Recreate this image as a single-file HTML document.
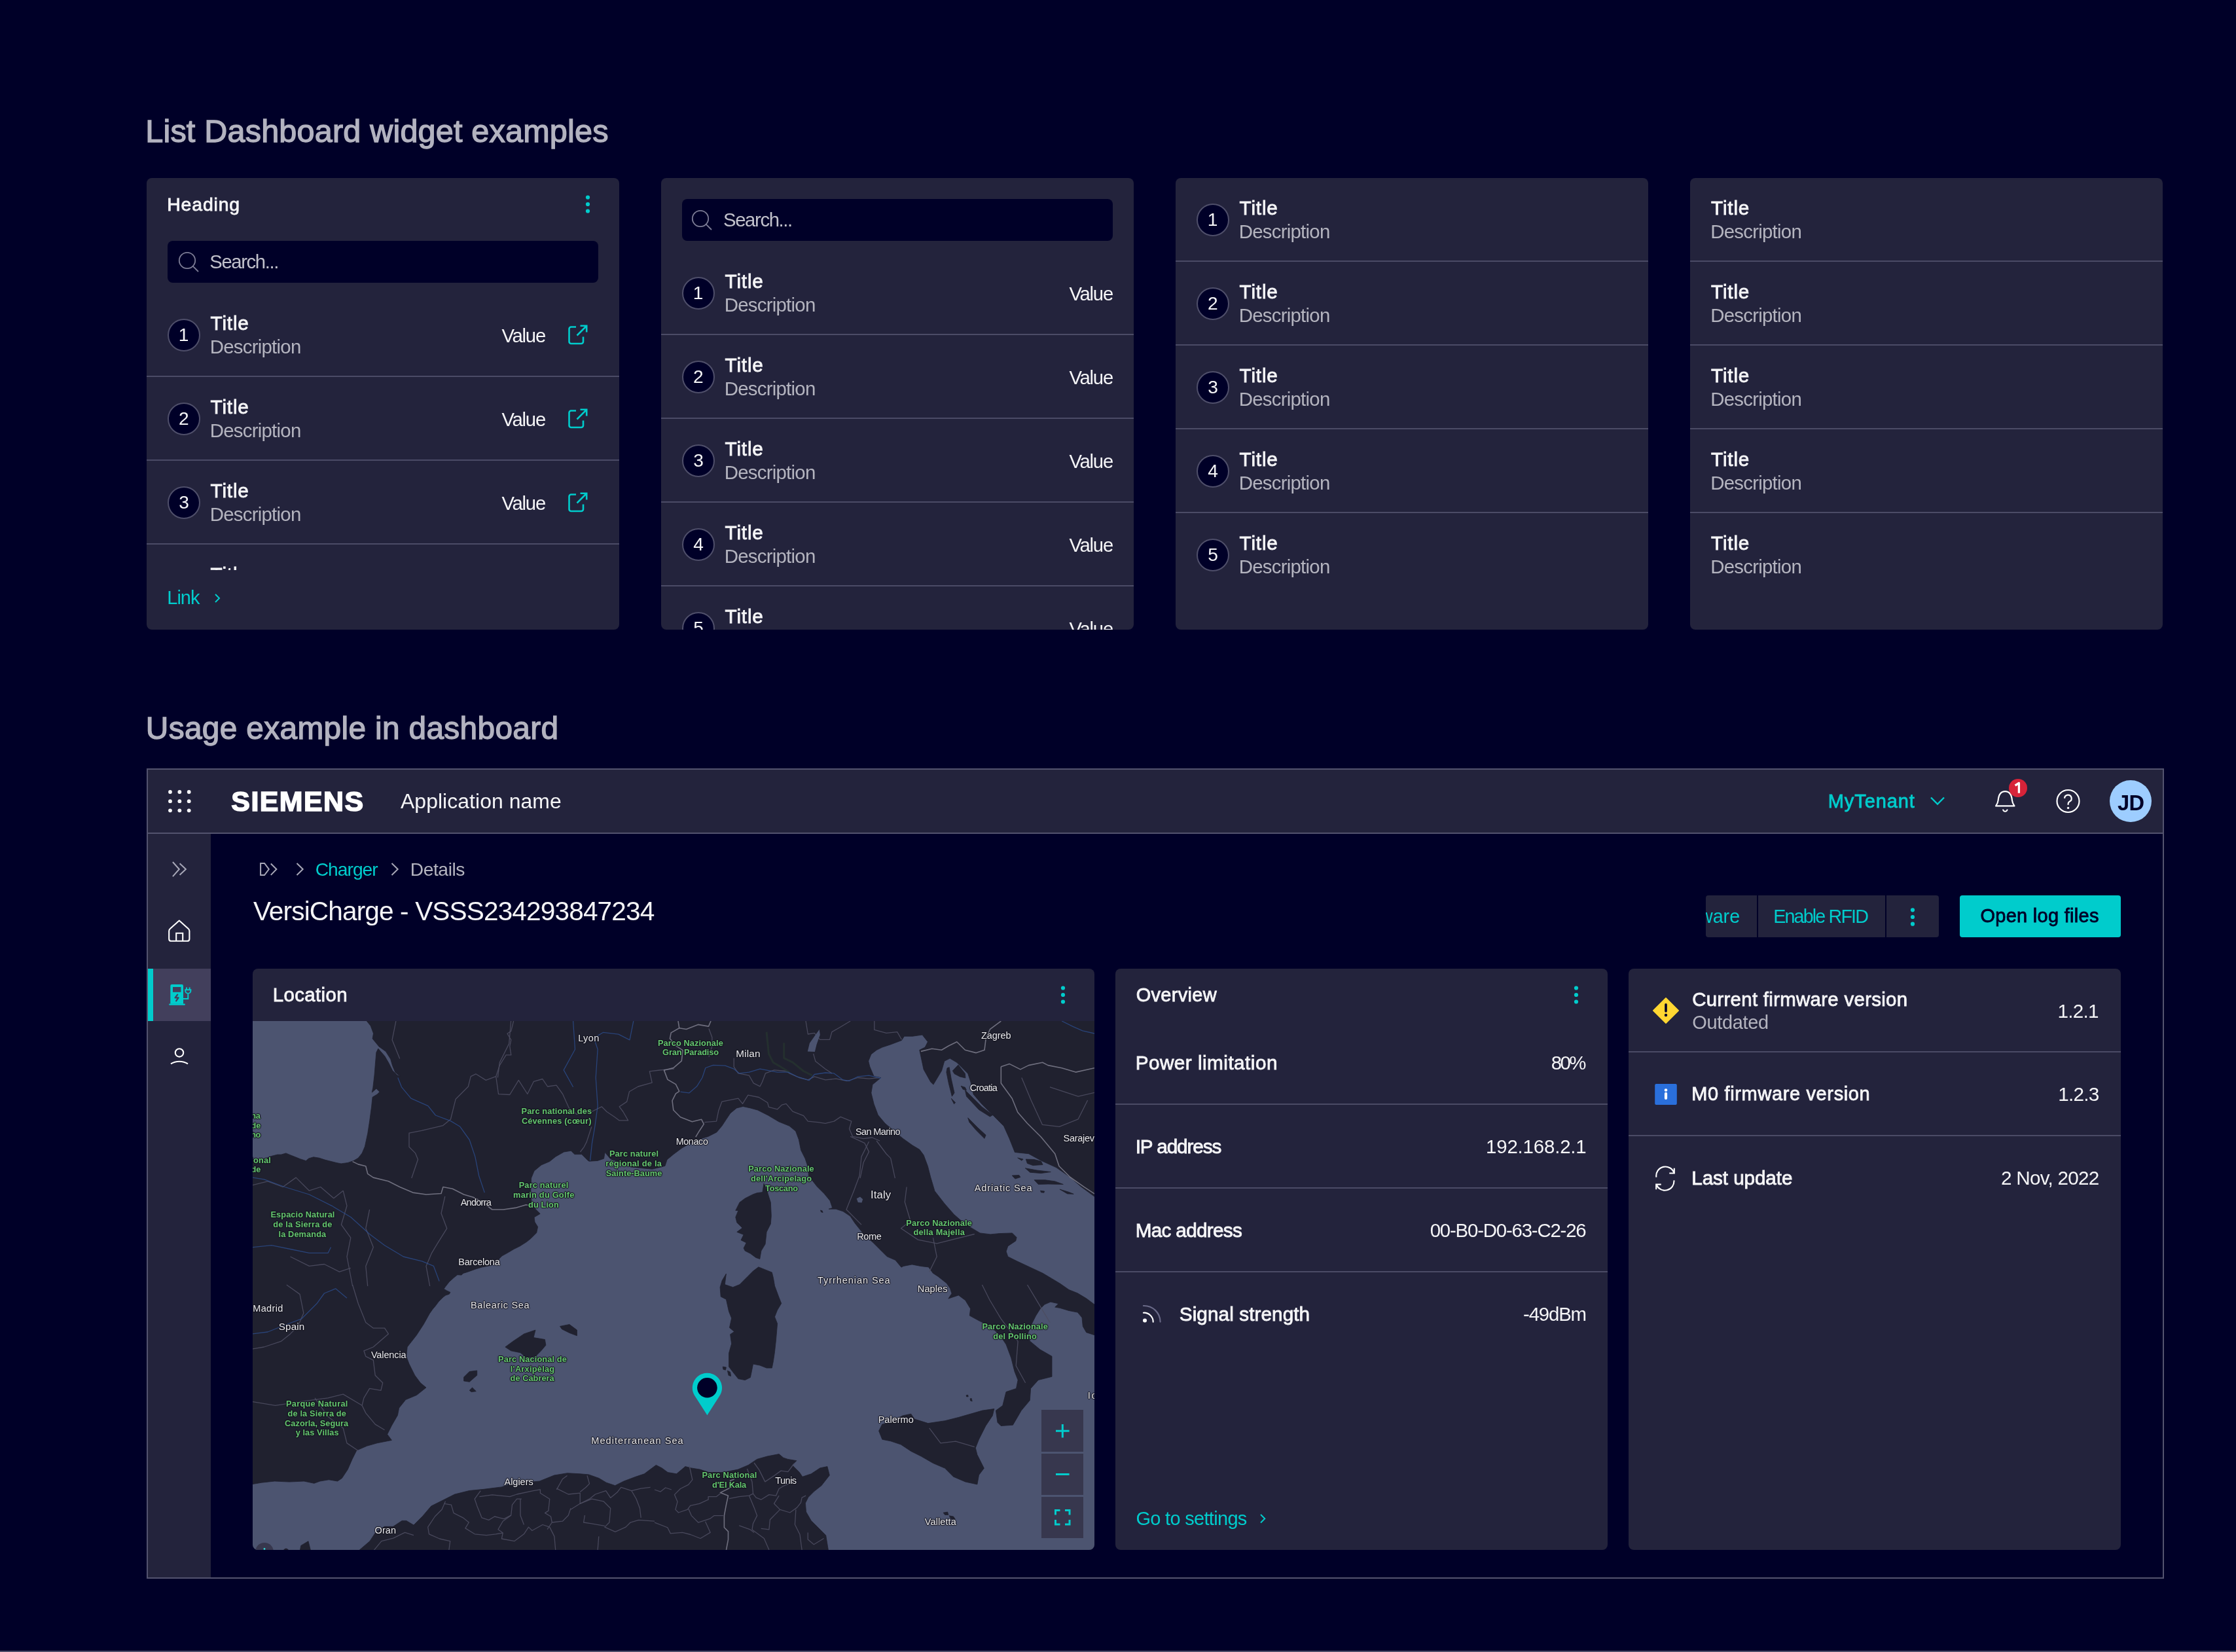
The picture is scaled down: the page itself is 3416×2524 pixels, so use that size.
<!DOCTYPE html>
<html><head><meta charset="utf-8"><style>
html,body{margin:0;padding:0;}
body{width:3416px;height:2524px;background:#000028;position:relative;overflow:hidden;font-family:"Liberation Sans",sans-serif;}
#root{position:absolute;left:0;top:0;width:3416px;height:2524px;will-change:transform;}
.a{position:absolute;}
.t{position:absolute;white-space:nowrap;line-height:1;}
.lbl .t{text-shadow:0 0 1.5px #14141e,1px 0 1px #14141e,-1px 0 1px #14141e,0 1px 1px #14141e,0 -1px 1px #14141e;}
svg.a{overflow:visible}
</style></head><body>
<div id="root"><div class="t" style="left:222.21px;top:175.73px;font-size:48.55px;letter-spacing:0.195px;color:#b3b3c0;-webkit-text-stroke:1.36px #b3b3c0">List Dashboard widget examples</div>
<div class="a" style="left:224.00px;top:272.00px;width:722.00px;height:690.00px;background:#23233c;border-radius:8px"></div>
<div class="t" style="left:255.28px;top:297.86px;font-size:28.41px;letter-spacing:0.833px;color:#f5f5f7;-webkit-text-stroke:0.80px #f5f5f7">Heading</div>
<svg class="a" style="left:886.00px;top:300.00px" width="24" height="24" viewBox="0 0 24 24"><circle cx="12" cy="1.5" r="3.1" fill="#00cccc"/><circle cx="12" cy="12" r="3.1" fill="#00cccc"/><circle cx="12" cy="22.5" r="3.1" fill="#00cccc"/></svg>
<div class="a" style="left:256.00px;top:368.00px;width:658.00px;height:64.00px;background:#000028;border-radius:8px"></div>
<svg class="a" style="left:272.00px;top:384.00px" width="34" height="34" viewBox="0 0 34 34"><circle cx="14" cy="14" r="12.2" fill="none" stroke="#7d7d96" stroke-width="1.8"/><line x1="22.6" y1="22.6" x2="31" y2="31" stroke="#7d7d96" stroke-width="1.8"/></svg>
<div class="t" style="left:320.29px;top:385.12px;font-size:29.28px;letter-spacing:-1.375px;color:#c2c2cc;font-weight:400">Search...</div>
<div class="a" style="left:224px;top:432px;width:722px;height:439px;overflow:hidden"><div class="a" style="left:32.00px;top:55.00px;width:50px;height:50px;box-sizing:border-box;border:2px solid #4f4f6a;border-radius:50%;background:#000028"></div><div class="t" style="left:48.87px;top:66.10px;font-size:28.12px;letter-spacing:0.000px;color:#f5f5f7;font-weight:400">1</div><div class="t" style="left:97.54px;top:47.25px;font-size:29.71px;letter-spacing:0.836px;color:#f5f5f7;-webkit-text-stroke:0.83px #f5f5f7">Title</div><div class="t" style="left:96.70px;top:83.29px;font-size:29.42px;letter-spacing:-0.751px;color:#b4b4bf;font-weight:400">Description</div><div class="t" style="left:542.40px;top:65.62px;font-size:29.28px;letter-spacing:-1.229px;color:#f5f5f7;font-weight:400">Value</div><svg class="a" style="left:644.00px;top:64.00px" width="30" height="31" viewBox="0 0 30 31"><path d="M12 3.5H4.5a3 3 0 0 0-3 3V26a3 3 0 0 0 3 3H20a3 3 0 0 0 3-3V18.5" fill="none" stroke="#00cccc" stroke-width="2.6"/><path d="M13.5 16.5L28 2M18.5 1.8H28.2V11.5" fill="none" stroke="#00cccc" stroke-width="2.6"/></svg><div class="a" style="left:0.00px;top:142.00px;width:722.00px;height:2.00px;background:#4b4b66;"></div><div class="a" style="left:32.00px;top:183.00px;width:50px;height:50px;box-sizing:border-box;border:2px solid #4f4f6a;border-radius:50%;background:#000028"></div><div class="t" style="left:49.09px;top:194.10px;font-size:28.12px;letter-spacing:0.000px;color:#f5f5f7;font-weight:400">2</div><div class="t" style="left:97.54px;top:175.25px;font-size:29.71px;letter-spacing:0.836px;color:#f5f5f7;-webkit-text-stroke:0.83px #f5f5f7">Title</div><div class="t" style="left:96.70px;top:211.29px;font-size:29.42px;letter-spacing:-0.751px;color:#b4b4bf;font-weight:400">Description</div><div class="t" style="left:542.40px;top:193.62px;font-size:29.28px;letter-spacing:-1.229px;color:#f5f5f7;font-weight:400">Value</div><svg class="a" style="left:644.00px;top:192.00px" width="30" height="31" viewBox="0 0 30 31"><path d="M12 3.5H4.5a3 3 0 0 0-3 3V26a3 3 0 0 0 3 3H20a3 3 0 0 0 3-3V18.5" fill="none" stroke="#00cccc" stroke-width="2.6"/><path d="M13.5 16.5L28 2M18.5 1.8H28.2V11.5" fill="none" stroke="#00cccc" stroke-width="2.6"/></svg><div class="a" style="left:0.00px;top:270.00px;width:722.00px;height:2.00px;background:#4b4b66;"></div><div class="a" style="left:32.00px;top:311.00px;width:50px;height:50px;box-sizing:border-box;border:2px solid #4f4f6a;border-radius:50%;background:#000028"></div><div class="t" style="left:49.31px;top:322.10px;font-size:28.12px;letter-spacing:0.000px;color:#f5f5f7;font-weight:400">3</div><div class="t" style="left:97.54px;top:303.25px;font-size:29.71px;letter-spacing:0.836px;color:#f5f5f7;-webkit-text-stroke:0.83px #f5f5f7">Title</div><div class="t" style="left:96.70px;top:339.29px;font-size:29.42px;letter-spacing:-0.751px;color:#b4b4bf;font-weight:400">Description</div><div class="t" style="left:542.40px;top:321.62px;font-size:29.28px;letter-spacing:-1.229px;color:#f5f5f7;font-weight:400">Value</div><svg class="a" style="left:644.00px;top:320.00px" width="30" height="31" viewBox="0 0 30 31"><path d="M12 3.5H4.5a3 3 0 0 0-3 3V26a3 3 0 0 0 3 3H20a3 3 0 0 0 3-3V18.5" fill="none" stroke="#00cccc" stroke-width="2.6"/><path d="M13.5 16.5L28 2M18.5 1.8H28.2V11.5" fill="none" stroke="#00cccc" stroke-width="2.6"/></svg><div class="a" style="left:0.00px;top:398.00px;width:722.00px;height:2.00px;background:#4b4b66;"></div><div class="a" style="left:32.00px;top:439.00px;width:50px;height:50px;box-sizing:border-box;border:2px solid #4f4f6a;border-radius:50%;background:#000028"></div><div class="t" style="left:49.31px;top:450.10px;font-size:28.12px;letter-spacing:0.000px;color:#f5f5f7;font-weight:400">4</div><div class="t" style="left:97.54px;top:431.25px;font-size:29.71px;letter-spacing:0.836px;color:#f5f5f7;-webkit-text-stroke:0.83px #f5f5f7">Title</div><div class="t" style="left:96.70px;top:467.29px;font-size:29.42px;letter-spacing:-0.751px;color:#b4b4bf;font-weight:400">Description</div><div class="t" style="left:542.40px;top:449.62px;font-size:29.28px;letter-spacing:-1.229px;color:#f5f5f7;font-weight:400">Value</div><svg class="a" style="left:644.00px;top:448.00px" width="30" height="31" viewBox="0 0 30 31"><path d="M12 3.5H4.5a3 3 0 0 0-3 3V26a3 3 0 0 0 3 3H20a3 3 0 0 0 3-3V18.5" fill="none" stroke="#00cccc" stroke-width="2.6"/><path d="M13.5 16.5L28 2M18.5 1.8H28.2V11.5" fill="none" stroke="#00cccc" stroke-width="2.6"/></svg><div class="a" style="left:0.00px;top:526.00px;width:722.00px;height:2.00px;background:#4b4b66;"></div></div>
<div class="t" style="left:255.34px;top:899.36px;font-size:28.99px;letter-spacing:-1.021px;color:#00cccc;font-weight:400">Link</div>
<svg class="a" style="left:328.00px;top:907.00px" width="9" height="15" viewBox="0 0 9 15"><path d="M1 1L7 7L1 13" fill="none" stroke="#00cccc" stroke-width="2"/></svg>
<div class="a" style="left:1010px;top:272px;width:722px;height:690px;overflow:hidden;border-radius:8px;background:#23233c"><div class="a" style="left:32.00px;top:32.00px;width:658.00px;height:64.00px;background:#000028;border-radius:8px"></div><svg class="a" style="left:46.00px;top:48.00px" width="34" height="34" viewBox="0 0 34 34"><circle cx="14" cy="14" r="12.2" fill="none" stroke="#7d7d96" stroke-width="1.8"/><line x1="22.6" y1="22.6" x2="31" y2="31" stroke="#7d7d96" stroke-width="1.8"/></svg><div class="t" style="left:95.09px;top:49.12px;font-size:29.28px;letter-spacing:-1.375px;color:#c2c2cc;font-weight:400">Search...</div><div class="a" style="left:32.00px;top:151.00px;width:50px;height:50px;box-sizing:border-box;border:2px solid #4f4f6a;border-radius:50%;background:#000028"></div><div class="t" style="left:48.87px;top:162.10px;font-size:28.12px;letter-spacing:0.000px;color:#f5f5f7;font-weight:400">1</div><div class="t" style="left:97.54px;top:143.25px;font-size:29.71px;letter-spacing:0.836px;color:#f5f5f7;-webkit-text-stroke:0.83px #f5f5f7">Title</div><div class="t" style="left:96.70px;top:179.29px;font-size:29.42px;letter-spacing:-0.751px;color:#b4b4bf;font-weight:400">Description</div><div class="t" style="left:623.40px;top:161.62px;font-size:29.28px;letter-spacing:-1.229px;color:#f5f5f7;font-weight:400">Value</div><div class="a" style="left:0.00px;top:238.00px;width:722.00px;height:2.00px;background:#4b4b66;"></div><div class="a" style="left:32.00px;top:279.00px;width:50px;height:50px;box-sizing:border-box;border:2px solid #4f4f6a;border-radius:50%;background:#000028"></div><div class="t" style="left:49.09px;top:290.10px;font-size:28.12px;letter-spacing:0.000px;color:#f5f5f7;font-weight:400">2</div><div class="t" style="left:97.54px;top:271.25px;font-size:29.71px;letter-spacing:0.836px;color:#f5f5f7;-webkit-text-stroke:0.83px #f5f5f7">Title</div><div class="t" style="left:96.70px;top:307.29px;font-size:29.42px;letter-spacing:-0.751px;color:#b4b4bf;font-weight:400">Description</div><div class="t" style="left:623.40px;top:289.62px;font-size:29.28px;letter-spacing:-1.229px;color:#f5f5f7;font-weight:400">Value</div><div class="a" style="left:0.00px;top:366.00px;width:722.00px;height:2.00px;background:#4b4b66;"></div><div class="a" style="left:32.00px;top:407.00px;width:50px;height:50px;box-sizing:border-box;border:2px solid #4f4f6a;border-radius:50%;background:#000028"></div><div class="t" style="left:49.31px;top:418.10px;font-size:28.12px;letter-spacing:0.000px;color:#f5f5f7;font-weight:400">3</div><div class="t" style="left:97.54px;top:399.25px;font-size:29.71px;letter-spacing:0.836px;color:#f5f5f7;-webkit-text-stroke:0.83px #f5f5f7">Title</div><div class="t" style="left:96.70px;top:435.29px;font-size:29.42px;letter-spacing:-0.751px;color:#b4b4bf;font-weight:400">Description</div><div class="t" style="left:623.40px;top:417.62px;font-size:29.28px;letter-spacing:-1.229px;color:#f5f5f7;font-weight:400">Value</div><div class="a" style="left:0.00px;top:494.00px;width:722.00px;height:2.00px;background:#4b4b66;"></div><div class="a" style="left:32.00px;top:535.00px;width:50px;height:50px;box-sizing:border-box;border:2px solid #4f4f6a;border-radius:50%;background:#000028"></div><div class="t" style="left:49.31px;top:546.10px;font-size:28.12px;letter-spacing:0.000px;color:#f5f5f7;font-weight:400">4</div><div class="t" style="left:97.54px;top:527.25px;font-size:29.71px;letter-spacing:0.836px;color:#f5f5f7;-webkit-text-stroke:0.83px #f5f5f7">Title</div><div class="t" style="left:96.70px;top:563.29px;font-size:29.42px;letter-spacing:-0.751px;color:#b4b4bf;font-weight:400">Description</div><div class="t" style="left:623.40px;top:545.62px;font-size:29.28px;letter-spacing:-1.229px;color:#f5f5f7;font-weight:400">Value</div><div class="a" style="left:0.00px;top:622.00px;width:722.00px;height:2.00px;background:#4b4b66;"></div><div class="a" style="left:32.00px;top:663.00px;width:50px;height:50px;box-sizing:border-box;border:2px solid #4f4f6a;border-radius:50%;background:#000028"></div><div class="t" style="left:49.31px;top:674.10px;font-size:28.12px;letter-spacing:0.000px;color:#f5f5f7;font-weight:400">5</div><div class="t" style="left:97.54px;top:655.25px;font-size:29.71px;letter-spacing:0.836px;color:#f5f5f7;-webkit-text-stroke:0.83px #f5f5f7">Title</div><div class="t" style="left:96.70px;top:691.29px;font-size:29.42px;letter-spacing:-0.751px;color:#b4b4bf;font-weight:400">Description</div><div class="t" style="left:623.40px;top:673.62px;font-size:29.28px;letter-spacing:-1.229px;color:#f5f5f7;font-weight:400">Value</div><div class="a" style="left:0.00px;top:750.00px;width:722.00px;height:2.00px;background:#4b4b66;"></div></div>
<div class="a" style="left:1796.00px;top:272.00px;width:722.00px;height:690.00px;background:#23233c;border-radius:8px"></div>
<div class="a" style="left:1828.00px;top:311.00px;width:50px;height:50px;box-sizing:border-box;border:2px solid #4f4f6a;border-radius:50%;background:#000028"></div><div class="t" style="left:1844.87px;top:322.10px;font-size:28.12px;letter-spacing:0.000px;color:#f5f5f7;font-weight:400">1</div><div class="t" style="left:1893.54px;top:303.25px;font-size:29.71px;letter-spacing:0.836px;color:#f5f5f7;-webkit-text-stroke:0.83px #f5f5f7">Title</div><div class="t" style="left:1892.70px;top:339.29px;font-size:29.42px;letter-spacing:-0.751px;color:#b4b4bf;font-weight:400">Description</div><div class="a" style="left:1796.00px;top:398.00px;width:722.00px;height:2.00px;background:#4b4b66;"></div><div class="a" style="left:1828.00px;top:439.00px;width:50px;height:50px;box-sizing:border-box;border:2px solid #4f4f6a;border-radius:50%;background:#000028"></div><div class="t" style="left:1845.09px;top:450.10px;font-size:28.12px;letter-spacing:0.000px;color:#f5f5f7;font-weight:400">2</div><div class="t" style="left:1893.54px;top:431.25px;font-size:29.71px;letter-spacing:0.836px;color:#f5f5f7;-webkit-text-stroke:0.83px #f5f5f7">Title</div><div class="t" style="left:1892.70px;top:467.29px;font-size:29.42px;letter-spacing:-0.751px;color:#b4b4bf;font-weight:400">Description</div><div class="a" style="left:1796.00px;top:526.00px;width:722.00px;height:2.00px;background:#4b4b66;"></div><div class="a" style="left:1828.00px;top:567.00px;width:50px;height:50px;box-sizing:border-box;border:2px solid #4f4f6a;border-radius:50%;background:#000028"></div><div class="t" style="left:1845.31px;top:578.10px;font-size:28.12px;letter-spacing:0.000px;color:#f5f5f7;font-weight:400">3</div><div class="t" style="left:1893.54px;top:559.25px;font-size:29.71px;letter-spacing:0.836px;color:#f5f5f7;-webkit-text-stroke:0.83px #f5f5f7">Title</div><div class="t" style="left:1892.70px;top:595.29px;font-size:29.42px;letter-spacing:-0.751px;color:#b4b4bf;font-weight:400">Description</div><div class="a" style="left:1796.00px;top:654.00px;width:722.00px;height:2.00px;background:#4b4b66;"></div><div class="a" style="left:1828.00px;top:695.00px;width:50px;height:50px;box-sizing:border-box;border:2px solid #4f4f6a;border-radius:50%;background:#000028"></div><div class="t" style="left:1845.31px;top:706.10px;font-size:28.12px;letter-spacing:0.000px;color:#f5f5f7;font-weight:400">4</div><div class="t" style="left:1893.54px;top:687.25px;font-size:29.71px;letter-spacing:0.836px;color:#f5f5f7;-webkit-text-stroke:0.83px #f5f5f7">Title</div><div class="t" style="left:1892.70px;top:723.29px;font-size:29.42px;letter-spacing:-0.751px;color:#b4b4bf;font-weight:400">Description</div><div class="a" style="left:1796.00px;top:782.00px;width:722.00px;height:2.00px;background:#4b4b66;"></div><div class="a" style="left:1828.00px;top:823.00px;width:50px;height:50px;box-sizing:border-box;border:2px solid #4f4f6a;border-radius:50%;background:#000028"></div><div class="t" style="left:1845.31px;top:834.10px;font-size:28.12px;letter-spacing:0.000px;color:#f5f5f7;font-weight:400">5</div><div class="t" style="left:1893.54px;top:815.25px;font-size:29.71px;letter-spacing:0.836px;color:#f5f5f7;-webkit-text-stroke:0.83px #f5f5f7">Title</div><div class="t" style="left:1892.70px;top:851.29px;font-size:29.42px;letter-spacing:-0.751px;color:#b4b4bf;font-weight:400">Description</div>
<div class="a" style="left:2582.00px;top:272.00px;width:722.00px;height:690.00px;background:#23233c;border-radius:8px"></div>
<div class="t" style="left:2614.04px;top:303.25px;font-size:29.71px;letter-spacing:0.836px;color:#f5f5f7;-webkit-text-stroke:0.83px #f5f5f7">Title</div><div class="t" style="left:2613.20px;top:339.29px;font-size:29.42px;letter-spacing:-0.751px;color:#b4b4bf;font-weight:400">Description</div><div class="a" style="left:2582.00px;top:398.00px;width:722.00px;height:2.00px;background:#4b4b66;"></div><div class="t" style="left:2614.04px;top:431.25px;font-size:29.71px;letter-spacing:0.836px;color:#f5f5f7;-webkit-text-stroke:0.83px #f5f5f7">Title</div><div class="t" style="left:2613.20px;top:467.29px;font-size:29.42px;letter-spacing:-0.751px;color:#b4b4bf;font-weight:400">Description</div><div class="a" style="left:2582.00px;top:526.00px;width:722.00px;height:2.00px;background:#4b4b66;"></div><div class="t" style="left:2614.04px;top:559.25px;font-size:29.71px;letter-spacing:0.836px;color:#f5f5f7;-webkit-text-stroke:0.83px #f5f5f7">Title</div><div class="t" style="left:2613.20px;top:595.29px;font-size:29.42px;letter-spacing:-0.751px;color:#b4b4bf;font-weight:400">Description</div><div class="a" style="left:2582.00px;top:654.00px;width:722.00px;height:2.00px;background:#4b4b66;"></div><div class="t" style="left:2614.04px;top:687.25px;font-size:29.71px;letter-spacing:0.836px;color:#f5f5f7;-webkit-text-stroke:0.83px #f5f5f7">Title</div><div class="t" style="left:2613.20px;top:723.29px;font-size:29.42px;letter-spacing:-0.751px;color:#b4b4bf;font-weight:400">Description</div><div class="a" style="left:2582.00px;top:782.00px;width:722.00px;height:2.00px;background:#4b4b66;"></div><div class="t" style="left:2614.04px;top:815.25px;font-size:29.71px;letter-spacing:0.836px;color:#f5f5f7;-webkit-text-stroke:0.83px #f5f5f7">Title</div><div class="t" style="left:2613.20px;top:851.29px;font-size:29.42px;letter-spacing:-0.751px;color:#b4b4bf;font-weight:400">Description</div>
<div class="t" style="left:222.81px;top:1089.15px;font-size:47.83px;letter-spacing:0.326px;color:#b3b3c0;-webkit-text-stroke:1.34px #b3b3c0">Usage example in dashboard</div>
<div class="a" style="left:224.00px;top:1174.00px;width:3082.00px;height:1238.00px;background:#000028;box-sizing:border-box;border:2px solid #53536e"></div>
<div class="a" style="left:226.00px;top:1176.00px;width:3078.00px;height:96.00px;background:#23233c;"></div>
<div class="a" style="left:226.00px;top:1272.00px;width:3078.00px;height:2.00px;background:#53536e;"></div>
<div class="a" style="left:226.00px;top:1274.00px;width:96.00px;height:1136.00px;background:#23233c;"></div>
<div class="a" style="left:0.00px;top:2522.00px;width:3416.00px;height:2.00px;background:#4d4d68;"></div>
<svg class="a" style="left:255.70px;top:1205.50px" width="37" height="37" viewBox="0 0 37 37"><circle cx="4" cy="4" r="2.9" fill="#f5f5f7"/><circle cx="4" cy="18.15" r="2.9" fill="#f5f5f7"/><circle cx="4" cy="32.3" r="2.9" fill="#f5f5f7"/><circle cx="18.35" cy="4" r="2.9" fill="#f5f5f7"/><circle cx="18.35" cy="18.15" r="2.9" fill="#f5f5f7"/><circle cx="18.35" cy="32.3" r="2.9" fill="#f5f5f7"/><circle cx="32.7" cy="4" r="2.9" fill="#f5f5f7"/><circle cx="32.7" cy="18.15" r="2.9" fill="#f5f5f7"/><circle cx="32.7" cy="32.3" r="2.9" fill="#f5f5f7"/></svg>
<div class="t" style="left:353.33px;top:1203.04px;font-size:42.90px;letter-spacing:1.453px;color:#ffffff;font-weight:700;-webkit-text-stroke:1.6px #ffffff">SIEMENS</div>
<div class="t" style="left:612.00px;top:1208.90px;font-size:31.88px;letter-spacing:0.080px;color:#f5f5f7;font-weight:400">Application name</div>
<div class="t" style="left:2792.74px;top:1209.76px;font-size:28.99px;letter-spacing:0.929px;color:#00cccc;-webkit-text-stroke:0.81px #00cccc">MyTenant</div>
<svg class="a" style="left:2948.00px;top:1216.00px" width="24" height="16" viewBox="0 0 24 16"><path d="M2 2.5L12 12.5L22 2.5" fill="none" stroke="#00cccc" stroke-width="2.4"/></svg>
<svg class="a" style="left:3044.00px;top:1204.00px" width="40" height="40" viewBox="0 0 40 40"><path d="M5.1 27.4C7.5 24 8.3 22 8.6 19C9.3 11 12.5 5.2 19.3 5.2C26.1 5.2 29.3 11 30 19C30.3 22 31.1 24 33.5 27.4Z" fill="none" stroke="#fff" stroke-width="2.2" stroke-linejoin="round"/><path d="M16.1 32.6a3.25 3.25 0 0 0 6.5 0" fill="none" stroke="#fff" stroke-width="2"/></svg>
<div class="a" style="left:3069.2px;top:1189.8px;width:28px;height:28px;border-radius:50%;background:#d72339"></div>
<svg class="a" style="left:3076.00px;top:1194.00px" width="14" height="20" viewBox="0 0 14 20"><path d="M2.6 6.2L8.4 2.4V17.8" fill="none" stroke="#fff" stroke-width="3.3" stroke-linejoin="round"/></svg>
<svg class="a" style="left:3139.00px;top:1204.00px" width="41" height="41" viewBox="0 0 41 41"><circle cx="20.5" cy="20" r="17" fill="none" stroke="#fff" stroke-width="2.2"/><path d="M15.1 15.8 a5.3 5.3 0 1 1 7.5 4.9 c-1.5 0.8 -2 1.7 -2 3.2 v1.8" fill="none" stroke="#fff" stroke-width="2.2"/><circle cx="20.6" cy="30.4" r="1.7" fill="#fff"/></svg>
<div class="a" style="left:3222.8px;top:1191.7px;width:64.7px;height:64.7px;border-radius:50%;background:#9dcdff"></div>
<div class="t" style="left:3234.92px;top:1210.78px;font-size:32.61px;letter-spacing:-0.554px;color:#000028;font-weight:700">JD</div>
<svg class="a" style="left:258.00px;top:1312.00px" width="34" height="32" viewBox="0 0 34 32"><path d="M5.9 5L15.8 16L5.9 27.2M16.6 7.3L25.9 16L16.6 24.8" fill="none" stroke="#a8a8b8" stroke-width="2"/></svg>
<svg class="a" style="left:254.00px;top:1402.00px" width="40" height="42" viewBox="0 0 40 42"><path d="M19.8 4.5L33.5 16.8C34.7 17.8 35.4 19 35.4 20.4V32.4C35.4 34.3 34 35.8 32 35.8H7.6C5.6 35.8 4.2 34.3 4.2 32.4V20.4C4.2 19 4.9 17.8 6.1 16.8Z" fill="none" stroke="#fff" stroke-width="2.1" stroke-linejoin="round"/><path d="M15.2 35.8V23.8H25.2V35.8" fill="none" stroke="#fff" stroke-width="2.1"/></svg>
<div class="a" style="left:226.00px;top:1480.00px;width:96.00px;height:80.00px;background:#423f5c;"></div>
<div class="a" style="left:226.00px;top:1480.00px;width:8.00px;height:80.00px;background:#00cccc;"></div>
<svg class="a" style="left:256.00px;top:1500.00px" width="40" height="40" viewBox="0 0 40 40"><path d="M6.5 4h15.3a2.2 2.2 0 0 1 2.2 2.2V33.8H4.3V6.2A2.2 2.2 0 0 1 6.5 4Z" fill="#00cccc"/><rect x="8" y="8" width="12.4" height="7.8" fill="#423f5c"/><path d="M15.2 19.6L11.6 24.4H16.6L13.2 29.2" fill="none" stroke="#423f5c" stroke-width="2.3" stroke-linecap="round" stroke-linejoin="round"/><rect x="2.2" y="33.6" width="24.7" height="2.2" rx="1" fill="#00cccc"/><path d="M24 26.1H31.3V18.4" fill="none" stroke="#00cccc" stroke-width="2"/><path d="M27.2 12.2h8.2v1.6a4.1 4.1 0 0 1-8.2 0Z" fill="none" stroke="#00cccc" stroke-width="1.9"/><path d="M29 8.5V12.2M33.6 8.5V12.2" stroke="#00cccc" stroke-width="1.9"/></svg>
<svg class="a" style="left:256.00px;top:1596.00px" width="36" height="36" viewBox="0 0 36 36"><circle cx="18" cy="12.4" r="6.2" fill="none" stroke="#fff" stroke-width="2.1"/><path d="M5 29.4C8.5 27 13 25.7 18 25.7C23 25.7 27.5 27 31 29.4" fill="none" stroke="#fff" stroke-width="2.1"/></svg>
<svg class="a" style="left:394.00px;top:1315.00px" width="32" height="26" viewBox="0 0 32 26"><path d="M4.1 4H10L16.8 13L10 22H4.1Z" fill="none" stroke="#a8a8b8" stroke-width="2"/><path d="M19.8 4.5L28.4 13L19.8 21.9" fill="none" stroke="#a8a8b8" stroke-width="2"/></svg>
<svg class="a" style="left:451.00px;top:1316.00px" width="15" height="24" viewBox="0 0 15 24"><path d="M2.5 3L11.7 12L2.5 21" fill="none" stroke="#a8a8b8" stroke-width="2"/></svg>
<div class="t" style="left:481.68px;top:1313.98px;font-size:28.26px;letter-spacing:-1.006px;color:#00cccc;font-weight:400">Charger</div>
<svg class="a" style="left:596.00px;top:1316.00px" width="15" height="24" viewBox="0 0 15 24"><path d="M2.5 3L11.7 12L2.5 21" fill="none" stroke="#a8a8b8" stroke-width="2"/></svg>
<div class="t" style="left:626.69px;top:1313.98px;font-size:28.26px;letter-spacing:-0.432px;color:#b4b4bf;font-weight:400">Details</div>
<div class="t" style="left:386.90px;top:1371.51px;font-size:40.58px;letter-spacing:-0.864px;color:#f5f5f7;font-weight:400">VersiCharge - VSSS234293847234</div>
<div class="a" style="left:2606px;top:1368px;width:356px;height:64px;overflow:hidden;border-radius:4px"><div class="a" style="left:0.00px;top:0.00px;width:78.00px;height:64.00px;background:#23233c;"></div><div class="a" style="left:80.00px;top:0.00px;width:194.00px;height:64.00px;background:#23233c;"></div><div class="a" style="left:276.00px;top:0.00px;width:80.00px;height:64.00px;background:#23233c;"></div><div class="t" style="left:-158.35px;top:17.61px;font-size:28.70px;letter-spacing:0.000px;color:#00cccc;font-weight:400">Update firmware</div><div class="t" style="left:103.16px;top:17.61px;font-size:28.70px;letter-spacing:-1.843px;color:#00cccc;font-weight:400">Enable RFID</div></div>
<svg class="a" style="left:2910.00px;top:1388.50px" width="24" height="24" viewBox="0 0 24 24"><circle cx="12" cy="1.3" r="3.1" fill="#00cccc"/><circle cx="12" cy="12" r="3.1" fill="#00cccc"/><circle cx="12" cy="22.7" r="3.1" fill="#00cccc"/></svg>
<div class="a" style="left:2994.00px;top:1368.00px;width:246.00px;height:64.00px;background:#00cccc;border-radius:4px"></div>
<div class="t" style="left:3025.44px;top:1385.36px;font-size:28.99px;letter-spacing:0.287px;color:#000028;-webkit-text-stroke:0.81px #000028">Open log files</div>
<div class="a" style="left:386.00px;top:1480.00px;width:1286.00px;height:888.00px;background:#23233c;border-radius:8px"></div>
<div class="t" style="left:416.70px;top:1505.29px;font-size:29.42px;letter-spacing:0.388px;color:#f5f5f7;-webkit-text-stroke:0.82px #f5f5f7">Location</div>
<svg class="a" style="left:1611.90px;top:1508.00px" width="24" height="24" viewBox="0 0 24 24"><circle cx="12" cy="1.5" r="3.1" fill="#00cccc"/><circle cx="12" cy="12" r="3.1" fill="#00cccc"/><circle cx="12" cy="22.5" r="3.1" fill="#00cccc"/></svg>
<div class="a" style="left:386px;top:1560px;width:1286px;height:808px;overflow:hidden;border-radius:0 0 8px 8px"><svg class="a" style="left:0;top:0" width="1286" height="808" viewBox="0 0 1286 808"><rect x="0" y="0" width="1286" height="808" fill="#4c5470"/><path d="M-10.0 212.8 L0.0 212.8 L14.5 211.4 L21.8 209.2 L29.1 206.3 L37.8 204.1 L43.6 204.1 L50.8 201.9 L58.1 204.9 L65.4 207.8 L72.6 210.7 L81.4 213.6 L85.7 209.9 L93.0 207.8 L101.7 209.2 L110.4 212.1 L119.1 214.3 L127.9 216.5 L135.1 217.9 L145.3 216.5 L154.0 213.6 L161.3 209.2 L167.1 201.9 L171.4 191.8 L175.8 171.4 L178.7 152.5 L181.6 130.8 L183.1 116.2 L190.3 111.9 L194.0 108.2 L188.9 103.2 L182.3 109.0 L183.8 101.7 L186.0 82.8 L187.4 65.4 L188.9 47.9 L191.8 42.1 L201.9 53.8 L207.8 63.9 L213.6 75.5 L220.8 82.8 L225.2 84.3 L217.9 78.5 L213.6 68.3 L210.7 58.1 L203.4 46.5 L193.2 39.2 L183.1 26.9 L184.5 18.9 L180.2 7.3 L174.3 0.0 L174.3 -10.0 L1296.0 -10.0 L1296.0 268.1 L1286.0 268.1 L1265.8 253.3 L1248.9 238.5 L1227.8 223.8 L1204.5 213.2 L1185.5 202.7 L1164.4 200.5 L1156.0 179.4 L1147.5 160.4 L1130.7 143.6 L1113.8 126.7 L1101.1 111.9 L1096.9 92.9 L1092.7 80.2 L1075.8 63.3 L1065.2 57.0 L1056.8 61.2 L1052.5 76.0 L1039.9 97.1 L1035.7 92.9 L1025.1 73.9 L1018.8 44.3 L1027.2 40.1 L1031.4 31.7 L1023.0 21.1 L1008.2 23.2 L995.5 23.2 L991.3 29.6 L974.4 35.9 L961.8 40.1 L953.3 44.3 L944.9 50.7 L940.7 61.2 L942.8 69.7 L949.1 84.4 L959.7 86.6 L947.0 97.1 L944.9 109.8 L949.1 126.7 L955.4 143.6 L966.0 156.2 L980.8 168.9 L993.4 179.4 L1008.2 190.0 L1018.8 196.3 L1025.1 204.8 L1031.4 221.7 L1035.7 238.5 L1042.0 259.7 L1056.8 278.7 L1071.5 295.5 L1088.4 310.3 L1111.2 323.9 L1127.2 325.9 L1140.5 324.6 L1160.4 323.9 L1167.1 330.6 L1165.8 335.9 L1153.8 343.9 L1151.1 351.9 L1153.8 359.9 L1167.1 366.6 L1187.1 375.9 L1207.0 385.2 L1220.4 393.2 L1233.7 401.2 L1247.0 410.5 L1260.3 415.8 L1273.6 423.8 L1286.0 433.1 L1300.3 433.1 L1300.3 479.7 L1286.0 479.7 L1273.6 475.7 L1268.3 466.4 L1267.0 453.1 L1260.3 445.1 L1247.0 442.5 L1233.7 438.5 L1225.7 437.1 L1231.0 431.8 L1219.0 429.1 L1209.7 433.1 L1203.1 439.8 L1196.4 450.4 L1192.4 458.4 L1188.4 466.4 L1184.4 477.1 L1187.3 488.9 L1202.8 501.8 L1221.0 512.2 L1221.0 543.3 L1200.2 548.5 L1188.6 561.4 L1187.3 579.6 L1174.3 595.1 L1161.4 617.2 L1143.2 618.5 L1138.0 613.3 L1135.4 595.1 L1145.8 587.4 L1148.4 577.0 L1151.0 566.6 L1166.5 561.4 L1169.1 548.5 L1164.0 535.5 L1158.8 514.8 L1151.0 494.0 L1140.6 478.5 L1125.1 465.5 L1109.5 457.8 L1095.3 450.0 L1096.6 439.6 L1088.8 426.7 L1078.4 418.9 L1062.9 424.1 L1068.0 416.3 L1065.5 408.5 L1060.3 400.7 L1047.3 390.4 L1039.3 385.2 L1032.6 375.9 L1020.6 374.5 L1007.3 371.9 L994.0 374.5 L991.0 376.2 L981.9 365.3 L969.2 359.8 L960.1 350.7 L947.4 338.0 L936.5 329.0 L927.4 318.1 L920.2 309.0 L912.9 298.1 L902.0 290.8 L891.1 287.2 L880.2 287.2 L885.7 285.4 L882.0 274.5 L873.0 263.6 L862.1 252.7 L849.3 236.3 L848.9 224.7 L844.1 210.2 L837.6 197.3 L834.4 181.2 L829.6 168.3 L819.9 160.3 L803.8 153.8 L787.7 144.2 L771.6 136.1 L760.3 132.9 L749.1 130.5 L739.4 132.9 L729.7 140.9 L723.3 150.6 L716.9 160.3 L708.8 169.9 L695.9 176.4 L679.8 181.2 L667.0 187.6 L655.7 194.1 L642.8 203.7 L633.1 211.8 L629.9 221.4 L610.6 226.3 L594.5 224.7 L578.4 223.0 L562.3 216.6 L546.2 210.2 L538.2 200.5 L536.5 210.2 L526.9 213.4 L514.0 214.2 L511.8 212.7 L502.7 203.6 L491.9 203.6 L486.4 198.2 L475.5 200.0 L462.8 207.2 L453.7 214.5 L441.0 219.9 L430.1 229.0 L425.6 239.9 L424.7 261.7 L426.5 281.7 L433.7 289.0 L439.2 294.4 L430.1 299.8 L431.0 307.1 L435.6 314.4 L433.7 323.5 L424.7 332.5 L418.3 337.6 L408.5 343.8 L399.4 348.3 L390.5 353.6 L380.7 359.0 L377.1 362.7 L373.5 368.9 L363.7 373.4 L350.2 376.1 L341.3 378.7 L328.8 383.2 L321.7 385.4 L319.0 388.1 L312.8 387.7 L307.4 392.1 L300.3 398.4 L294.8 405.5 L292.1 409.2 L296.6 411.9 L301.9 414.4 L300.3 417.2 L294.8 419.0 L291.2 421.7 L287.7 425.1 L284.1 428.8 L278.7 436.0 L275.2 440.0 L270.3 446.9 L261.2 463.3 L250.3 480.0 L236.2 498.0 L234.7 512.4 L239.1 524.0 L247.7 541.2 L256.3 552.8 L265.0 560.0 L250.6 571.5 L233.3 578.7 L232.6 580.0 L223.6 591.2 L221.4 602.4 L212.4 618.0 L205.7 631.4 L212.4 640.4 L190.1 644.8 L174.4 649.3 L158.8 656.0 L152.1 669.4 L145.3 685.1 L136.4 698.5 L129.7 703.0 L116.3 700.8 L102.9 703.0 L93.9 706.3 L78.3 703.0 L55.9 704.1 L33.5 703.0 L13.4 705.2 L0.0 707.5 L-8.9 707.5 L-10.0 707.5Z M781.0 248.2 L786.1 260.6 L791.3 277.0 L792.3 297.6 L791.3 310.0 L785.1 322.3 L783.1 340.8 L776.9 351.1 L774.8 363.5 L768.7 361.4 L760.4 355.2 L752.2 351.1 L750.1 347.0 L754.2 338.8 L746.0 334.7 L750.1 326.4 L739.8 322.3 L748.1 316.1 L739.8 307.9 L737.8 299.7 L741.9 289.4 L737.8 289.4 L744.0 277.0 L752.2 270.9 L764.5 264.7 L770.7 262.6 L778.9 261.6Z M772.8 375.8 L783.1 379.9 L793.3 384.0 L795.4 392.3 L797.5 404.6 L803.6 421.1 L807.7 431.4 L801.6 441.6 L797.5 451.9 L801.6 462.2 L799.5 486.9 L797.5 505.4 L795.4 519.8 L793.3 530.1 L785.1 530.1 L774.8 526.0 L764.5 524.0 L762.5 534.2 L760.4 544.5 L752.2 548.6 L741.9 546.6 L733.7 536.3 L727.5 528.1 L727.5 507.5 L731.6 493.1 L729.6 478.7 L735.7 474.6 L728.5 468.4 L731.6 454.0 L727.5 443.7 L723.4 425.2 L715.2 421.1 L714.1 406.7 L717.2 396.4 L723.4 386.1 L721.3 402.6 L733.7 406.7 L744.0 402.6 L756.3 390.2 L764.5 382.0Z M718.2 528.1 L723.4 529.1 L722.4 533.2 L718.9 532.2Z M725.4 534.2 L729.6 536.3 L730.6 542.5 L727.1 541.4Z M956.6 626.2 L961.8 615.9 L974.7 613.3 L992.9 602.9 L1005.8 600.3 L1011.0 608.1 L1031.8 614.6 L1057.7 610.7 L1078.4 605.5 L1096.6 600.3 L1114.7 595.1 L1132.8 592.5 L1130.3 602.9 L1119.9 618.5 L1109.5 639.2 L1104.3 652.2 L1106.9 662.5 L1114.7 678.1 L1117.3 683.3 L1109.5 693.6 L1106.9 707.9 L1088.8 704.0 L1070.6 696.2 L1057.7 683.3 L1039.5 675.5 L1021.4 665.1 L1005.8 657.3 L990.3 647.0 L974.7 641.8 L961.8 639.2Z M1055.1 751.2 L1061.6 750.1 L1062.9 754.5 L1057.7 754.5Z M1064.2 755.8 L1070.6 757.1 L1073.2 761.0 L1066.8 760.5Z M1090.1 571.8 L1092.7 571.3 L1093.2 573.9 L1090.6 573.9Z M1096.0 577.0 L1098.1 576.5 L1099.2 580.9 L1096.6 580.1Z M385.9 498.0 L397.5 489.4 L414.7 477.9 L432.0 472.1 L429.1 483.6 L446.4 486.5 L447.9 495.2 L440.7 503.8 L432.0 512.4 L417.6 513.9 L409.0 506.7 L394.6 503.8Z M469.5 466.4 L483.9 463.5 L495.4 472.1 L495.4 480.8 L483.9 476.4 L472.4 470.7Z M322.6 544.1 L331.2 535.5 L342.7 534.0 L342.7 541.2 L331.2 551.3 L322.6 549.9Z M331.2 564.3 L335.5 560.0 L341.3 565.7 L334.1 566.6Z M161.0 812.6 L163.2 808.1 L178.9 794.7 L187.8 781.3 L201.3 772.3 L214.7 772.3 L228.1 763.4 L234.8 763.4 L246.0 770.1 L259.4 756.7 L272.8 741.0 L290.7 732.1 L308.6 723.1 L330.9 717.5 L353.3 715.3 L380.1 711.9 L393.6 707.5 L413.7 705.2 L438.3 703.0 L460.6 694.0 L480.8 690.7 L500.0 691.8 L513.4 692.9 L529.1 698.5 L540.3 705.2 L553.7 709.7 L567.1 703.0 L585.0 696.3 L598.4 691.8 L607.3 685.1 L616.3 678.4 L625.2 682.9 L634.2 689.6 L647.6 691.8 L661.0 680.6 L669.9 682.9 L683.4 685.1 L696.8 689.6 L719.1 689.6 L741.5 685.1 L757.2 678.4 L770.6 669.4 L786.2 665.0 L804.1 661.6 L810.8 667.2 L817.5 669.4 L830.9 671.7 L824.2 678.4 L835.4 689.6 L839.9 696.3 L853.3 691.8 L866.7 682.9 L877.9 680.6 L881.3 694.0 L869.0 709.7 L857.8 718.6 L848.8 727.6 L844.4 736.5 L845.5 749.9 L853.3 763.4 L862.3 772.3 L875.7 785.7 L880.1 812.6 L880.1 818.0 L161.0 818.0Z M71.6 812.6 L73.8 801.4 L85.0 794.7 L89.4 812.6 L89.4 818.0 L71.6 818.0Z M1061.0 71.8 L1064.2 70.7 L1067.3 88.7 L1072.0 109.8 L1068.4 115.1 L1063.5 96.1 L1059.9 78.1Z M1069.4 76.0 L1077.9 67.1 L1088.4 80.2 L1088.9 87.0 L1080.4 84.9 L1072.0 80.6Z M1088.4 105.6 L1101.1 118.2 L1113.8 130.9 L1130.7 143.6 L1126.4 146.1 L1109.5 135.5 L1090.5 115.1Z M1092.7 147.8 L1107.4 162.6 L1120.1 174.2 L1118.0 179.4 L1105.3 166.8 L1094.8 154.5Z M1181.3 211.1 L1194.0 211.5 L1204.5 214.3 L1207.1 219.5 L1191.9 220.6 L1183.4 217.4Z M1180.3 224.8 L1198.2 228.0 L1219.3 230.5 L1204.5 232.6 L1187.7 231.2Z M1194.0 242.8 L1210.9 242.8 L1225.7 244.9 L1238.3 249.5 L1215.1 249.1 L1200.3 249.5Z M1160.2 236.0 L1170.8 235.4 L1172.9 238.5 L1164.9 241.1Z M1233.0 257.1 L1246.8 261.3 L1254.2 264.3 L1244.7 263.9Z M1168.7 209.0 L1177.1 211.1 L1175.0 213.2Z M1203.5 259.2 L1209.8 260.1 L1208.8 262.2 L1204.5 261.8Z M1082.1 99.2 L1088.4 101.3 L1090.5 105.6 L1085.3 104.5Z M1067.3 118.2 L1073.7 124.6 L1071.5 126.7Z M867.5 289.0 L870.2 289.9 L871.1 292.6 L868.4 291.7Z" fill="#20212f" stroke="#20212f" stroke-width="0.8" stroke-linejoin="round"/><path d="M152.6 403.0 L161.3 431.8 L172.8 460.6 L184.3 469.2 L201.6 469.2 L207.4 477.9 L184.3 498.0 L169.9 503.8 L172.8 512.4 L184.3 518.2 L187.2 541.2 L198.7 552.8 L195.9 564.3 L178.6 561.4 L169.9 575.8 L167.1 587.3 L172.8 598.9 L187.2 616.1 L201.6 624.8" fill="none" stroke="#4c4c60" stroke-width="1.3" stroke-opacity="0.9" stroke-linejoin="round"/><path d="M0.0 581.6 L34.6 587.3 L72.0 581.6 L115.2 575.8 L138.2 570.1 L167.1 587.3" fill="none" stroke="#4c4c60" stroke-width="1.3" stroke-opacity="0.9" stroke-linejoin="round"/><path d="M95.0 575.8 L115.2 604.6 L138.2 621.9 L144.0 644.9 L161.3 656.5" fill="none" stroke="#4c4c60" stroke-width="1.3" stroke-opacity="0.9" stroke-linejoin="round"/><path d="M51.8 403.0 L72.0 417.4 L77.8 446.2 L69.1 466.4 L57.6 477.9 L43.2 489.4 L17.3 498.0 L0.0 500.9" fill="none" stroke="#4c4c60" stroke-width="1.3" stroke-opacity="0.9" stroke-linejoin="round"/><path d="M0.0 250.6 L23.0 244.8 L46.1 253.5 L66.2 239.1 L86.4 259.2 L103.7 253.5 L123.8 270.7 L138.2 259.2" fill="none" stroke="#4c4c60" stroke-width="1.3" stroke-opacity="0.9" stroke-linejoin="round"/><path d="M138.2 259.2 L144.0 282.3 L135.4 311.1 L149.8 331.2 L144.0 360.0 L152.6 405.0" fill="none" stroke="#4c4c60" stroke-width="1.3" stroke-opacity="0.9" stroke-linejoin="round"/><path d="M293.8 267.9 L288.0 293.8 L296.7 316.8 L282.3 339.9 L273.6 354.3 L265.0 374.4 L270.7 405.0" fill="none" stroke="#4c4c60" stroke-width="1.3" stroke-opacity="0.9" stroke-linejoin="round"/><path d="M178.6 288.0 L172.8 316.8 L184.3 345.6 L172.8 374.4 L175.7 405.0" fill="none" stroke="#4c4c60" stroke-width="1.3" stroke-opacity="0.9" stroke-linejoin="round"/><path d="M57.6 360.0 L86.4 374.4 L109.4 371.5 L132.5 383.1 L149.8 377.3" fill="none" stroke="#4c4c60" stroke-width="1.3" stroke-opacity="0.9" stroke-linejoin="round"/><path d="M398.6 0.0 L394.8 15.4 L389.0 19.2 L394.8 28.8 L392.8 38.5 L394.8 51.9 L387.1 51.9 L377.5 67.3 L371.7 84.6 L356.3 90.4 L340.9 80.8 L333.2 84.6 L329.4 100.0 L310.2 119.2 L306.3 134.6 L302.5 150.0 L290.9 159.6 L258.2 167.3 L239.0 171.2 L239.0 192.3 L248.6 201.9 L252.5 211.5 L242.8 240.0" fill="none" stroke="#4c4c60" stroke-width="1.3" stroke-opacity="0.9" stroke-linejoin="round"/><path d="M371.7 84.6 L375.5 111.5 L392.8 112.5 L406.3 90.4 L419.8 111.5 L429.4 92.3 L442.8 88.5 L450.5 100.0 L464.0 98.1 L473.6 111.5 L483.2 132.7 L494.8 142.3 L517.8 138.5" fill="none" stroke="#4c4c60" stroke-width="1.3" stroke-opacity="0.9" stroke-linejoin="round"/><path d="M517.8 138.5 L533.2 130.8 L540.9 138.5 L552.5 146.2 L560.2 151.9 L573.6 151.9 L565.9 138.5 L560.2 130.8 L571.7 123.1 L575.5 107.7 L589.0 100.0 L610.2 94.2 L606.3 76.9 L621.7 75.0 L644.0 73.1" fill="none" stroke="#4c4c60" stroke-width="1.3" stroke-opacity="0.9" stroke-linejoin="round"/><path d="M517.8 161.5 L510.2 184.6 L506.3 192.3 L500.5 200.0" fill="none" stroke="#4c4c60" stroke-width="1.3" stroke-opacity="0.9" stroke-linejoin="round"/><path d="M394.6 0.0 L391.7 34.6 L377.3 63.4 L374.4 86.4" fill="none" stroke="#4c4c60" stroke-width="1.3" stroke-opacity="0.9" stroke-linejoin="round"/><path d="M218.9 0.0 L213.1 28.8 L224.7 57.6" fill="none" stroke="#4c4c60" stroke-width="1.3" stroke-opacity="0.9" stroke-linejoin="round"/><path d="M690.2 154.7 L708.5 153.1 L711.9 136.4 L716.9 123.1 L741.8 118.1 L748.5 126.4 L756.8 113.1 L773.4 116.5 L786.7 124.8 L788.4 131.4 L801.7 134.8 L808.4 128.1 L815.0 126.4 L825.0 138.1 L841.6 144.7 L848.3 153.1 L863.3 154.7 L874.9 156.4 L888.2 153.1 L898.2 146.4 L914.8 153.1 L911.5 164.7 L916.5 176.3 L933.1 179.7 L946.4 178.0 L958.1 183.0" fill="none" stroke="#4c4c60" stroke-width="1.3" stroke-opacity="0.9" stroke-linejoin="round"/><path d="M735.2 56.6 L735.2 69.9 L741.8 79.9 L758.5 83.2 L765.1 94.8 L775.1 99.8 L778.4 93.2 L783.4 79.9 L796.7 74.9 L815.0 76.5 L820.0 79.9 L835.0 86.5 L848.3 89.8 L858.3 84.8 L874.9 89.8 L891.5 88.2 L908.2 91.5 L924.8 86.5 L941.5 88.2 L958.1 86.5" fill="none" stroke="#4c4c60" stroke-width="1.3" stroke-opacity="0.9" stroke-linejoin="round"/><path d="M856.6 49.9 L859.9 61.6 L874.9 73.2 L884.9 79.9" fill="none" stroke="#4c4c60" stroke-width="1.3" stroke-opacity="0.9" stroke-linejoin="round"/><path d="M845.0 0.0 L848.3 20.0 L858.3 18.3 L866.6 28.3 L881.6 28.3 L884.9 16.6 L896.5 10.0 L913.2 0.0" fill="none" stroke="#4c4c60" stroke-width="1.3" stroke-opacity="0.9" stroke-linejoin="round"/><path d="M949.8 0.0 L949.8 13.3 L968.1 18.3 L984.7 16.6 L991.4 28.3" fill="none" stroke="#4c4c60" stroke-width="1.3" stroke-opacity="0.9" stroke-linejoin="round"/><path d="M913.2 176.3 L934.8 186.3 L941.5 199.6 L933.1 216.3 L928.1 240.1" fill="none" stroke="#4c4c60" stroke-width="1.3" stroke-opacity="0.9" stroke-linejoin="round"/><path d="M953.1 183.0 L968.1 203.0 L974.7 209.6 L981.4 240.1" fill="none" stroke="#4c4c60" stroke-width="1.3" stroke-opacity="0.9" stroke-linejoin="round"/><path d="M696.9 11.6 L701.9 25.0 L701.9 38.3 L696.9 54.9" fill="none" stroke="#4c4c60" stroke-width="1.3" stroke-opacity="0.9" stroke-linejoin="round"/><path d="M941.5 184.3 L930.0 207.4 L927.1 236.2 L918.5 259.2 L907.0 288.0 L930.0 311.1" fill="none" stroke="#4c4c60" stroke-width="1.3" stroke-opacity="0.9" stroke-linejoin="round"/><path d="M999.1 253.5 L996.3 276.5 L1004.9 305.3 L990.5 316.8 L1016.4 334.1 L1045.2 339.9 L1102.8 325.5" fill="none" stroke="#4c4c60" stroke-width="1.3" stroke-opacity="0.9" stroke-linejoin="round"/><path d="M1039.5 331.2 L1045.2 360.0 L1033.7 383.1" fill="none" stroke="#4c4c60" stroke-width="1.3" stroke-opacity="0.9" stroke-linejoin="round"/><path d="M1114.4 403.0 L1125.9 426.0 L1143.2 454.8 L1169.1 489.4 L1166.2 526.8 L1180.6 552.8" fill="none" stroke="#4c4c60" stroke-width="1.3" stroke-opacity="0.9" stroke-linejoin="round"/><path d="M1183.5 403.0 L1200.8 431.8 L1218.0 460.6" fill="none" stroke="#4c4c60" stroke-width="1.3" stroke-opacity="0.9" stroke-linejoin="round"/><path d="M1033.7 621.9 L1051.0 644.9 L1074.0 642.1 L1102.8 650.7" fill="none" stroke="#4c4c60" stroke-width="1.3" stroke-opacity="0.9" stroke-linejoin="round"/><path d="M1174.8 86.4 L1189.2 121.0 L1206.5 158.4 L1232.4 161.3 L1261.2 149.8 L1275.6 121.0" fill="none" stroke="#4c4c60" stroke-width="1.3" stroke-opacity="0.9" stroke-linejoin="round"/><path d="M1218.0 100.8 L1261.2 115.2 L1286.0 109.4" fill="none" stroke="#4c4c60" stroke-width="1.3" stroke-opacity="0.9" stroke-linejoin="round"/><path d="M294.5 733.8 L289.1 746.3 L278.4 757.0 L267.7 773.1 L269.5 783.8 L285.6 791.0 L301.7 794.6 L299.9 808.0" fill="none" stroke="#4c4c60" stroke-width="1.3" stroke-opacity="0.9" stroke-linejoin="round"/><path d="M292.7 737.3 L303.4 739.1 L307.0 751.6 L321.3 758.8 L330.3 766.0 L324.9 774.9 L339.2 783.8 L357.1 785.6 L371.4 783.8 L382.2 782.1 L375.0 776.7 L382.2 764.2 L394.7 755.2 L396.5 739.1 L403.6 730.2 L410.8 730.2" fill="none" stroke="#4c4c60" stroke-width="1.3" stroke-opacity="0.9" stroke-linejoin="round"/><path d="M348.2 717.7 L339.2 730.2 L342.8 740.9 L350.0 758.8 L360.7 762.4 L369.6 757.0 L383.9 760.6 L394.7 755.2" fill="none" stroke="#4c4c60" stroke-width="1.3" stroke-opacity="0.9" stroke-linejoin="round"/><path d="M346.4 726.6 L366.1 723.9 L392.9 726.6 L403.6 723.0 L428.7 717.7 L439.4 715.9 L439.4 721.2 L453.7 730.2 L451.9 748.1 L446.6 751.6 L455.5 757.0 L457.3 766.0 L450.1 776.7" fill="none" stroke="#4c4c60" stroke-width="1.3" stroke-opacity="0.9" stroke-linejoin="round"/><path d="M409.0 730.2 L409.0 755.2 L414.4 769.5" fill="none" stroke="#4c4c60" stroke-width="1.3" stroke-opacity="0.9" stroke-linejoin="round"/><path d="M464.4 715.9 L473.4 699.8 L480.5 694.4" fill="none" stroke="#4c4c60" stroke-width="1.3" stroke-opacity="0.9" stroke-linejoin="round"/><path d="M464.4 714.1 L482.3 723.0 L500.2 721.2 L500.2 737.3 L514.5 730.2 L523.5 723.0 L539.6 717.7 L546.7 728.4 L557.5 719.4 L562.8 712.3 L578.9 717.7 L593.2 714.1 L607.6 712.3" fill="none" stroke="#4c4c60" stroke-width="1.3" stroke-opacity="0.9" stroke-linejoin="round"/><path d="M511.0 694.4 L514.5 706.9 L509.2 712.3 L500.2 719.4" fill="none" stroke="#4c4c60" stroke-width="1.3" stroke-opacity="0.9" stroke-linejoin="round"/><path d="M485.9 744.5 L482.3 755.2 L473.4 764.2 L457.3 766.0" fill="none" stroke="#4c4c60" stroke-width="1.3" stroke-opacity="0.9" stroke-linejoin="round"/><path d="M485.9 746.3 L500.2 737.3 L518.1 730.2 L536.0 733.8 L546.7 744.5 L544.9 766.0 L537.8 773.1 L553.9 780.3 L570.0 773.1 L577.1 766.0 L589.7 762.4 L614.0 764.2" fill="none" stroke="#4c4c60" stroke-width="1.3" stroke-opacity="0.9" stroke-linejoin="round"/><path d="M507.4 755.2 L505.6 766.0 L516.3 767.7 L537.8 771.3" fill="none" stroke="#4c4c60" stroke-width="1.3" stroke-opacity="0.9" stroke-linejoin="round"/><path d="M578.9 717.7 L586.1 730.2 L591.5 744.5 L593.2 758.8" fill="none" stroke="#4c4c60" stroke-width="1.3" stroke-opacity="0.9" stroke-linejoin="round"/><path d="M382.2 782.1 L380.4 791.0 L400.0 794.6 L414.4 783.8 L421.5 773.1 L426.9 778.5 L443.0 769.5 L453.7 773.1 L460.9 787.4 L462.7 808.0" fill="none" stroke="#4c4c60" stroke-width="1.3" stroke-opacity="0.9" stroke-linejoin="round"/><path d="M528.8 787.4 L527.1 808.0" fill="none" stroke="#4c4c60" stroke-width="1.3" stroke-opacity="0.9" stroke-linejoin="round"/><path d="M185.6 808.1 L196.8 794.7 L214.7 790.2 L232.6 781.3 L246.0 785.7" fill="none" stroke="#4c4c60" stroke-width="1.3" stroke-opacity="0.9" stroke-linejoin="round"/><path d="M667.2 679.5 L671.8 700.8 L665.7 708.4 L653.5 714.5 L644.4 723.6 L649.0 734.3 L645.9 746.4 L650.5 751.0 L664.2 746.4 L668.7 740.4 L682.4 737.3 L696.1 731.2 L696.1 726.7 L708.3 726.7 L714.4 722.1" fill="none" stroke="#4c4c60" stroke-width="1.3" stroke-opacity="0.9" stroke-linejoin="round"/><path d="M665.7 744.9 L670.3 755.6 L680.9 766.2 L690.0 763.2 L699.2 760.1 L705.2 755.6 L718.9 755.6" fill="none" stroke="#4c4c60" stroke-width="1.3" stroke-opacity="0.9" stroke-linejoin="round"/><path d="M766.1 675.0 L773.7 685.6 L782.8 703.9 L796.5 694.7 L807.1 687.1 L817.8 688.7 L826.9 676.5" fill="none" stroke="#4c4c60" stroke-width="1.3" stroke-opacity="0.9" stroke-linejoin="round"/><path d="M755.4 684.1 L763.0 703.9 L764.5 722.1 L769.1 728.2 L776.7 731.2 L788.9 723.6 L799.5 725.2 L804.1 714.5 L811.7 710.0 L819.3 706.9" fill="none" stroke="#4c4c60" stroke-width="1.3" stroke-opacity="0.9" stroke-linejoin="round"/><path d="M728.1 729.7 L743.3 726.7 L758.5 725.2 L764.5 722.1" fill="none" stroke="#4c4c60" stroke-width="1.3" stroke-opacity="0.9" stroke-linejoin="round"/><path d="M758.5 725.2 L766.1 743.4 L770.6 755.6 L764.5 767.7 L763.0 776.9 L781.3 790.5 L788.9 808.0" fill="none" stroke="#4c4c60" stroke-width="1.3" stroke-opacity="0.9" stroke-linejoin="round"/><path d="M804.1 725.2 L796.5 737.3 L805.6 746.4 L820.8 751.0 L831.5 743.4 L837.5 735.8 L839.1 728.2 L845.1 725.2" fill="none" stroke="#4c4c60" stroke-width="1.3" stroke-opacity="0.9" stroke-linejoin="round"/><path d="M805.6 746.4 L790.4 761.7 L788.9 776.9 L776.7 775.3" fill="none" stroke="#4c4c60" stroke-width="1.3" stroke-opacity="0.9" stroke-linejoin="round"/><path d="M829.9 746.4 L828.4 769.3 L836.0 784.5 L839.1 808.0" fill="none" stroke="#4c4c60" stroke-width="1.3" stroke-opacity="0.9" stroke-linejoin="round"/><path d="M743.3 770.8 L760.0 776.9 L766.1 781.4" fill="none" stroke="#4c4c60" stroke-width="1.3" stroke-opacity="0.9" stroke-linejoin="round"/><path d="M614.0 766.2 L633.8 773.8 L638.3 782.9 L656.6 781.4 L668.7 784.5 L684.0 790.5 L699.2 781.4 L691.6 764.7" fill="none" stroke="#4c4c60" stroke-width="1.3" stroke-opacity="0.9" stroke-linejoin="round"/><path d="M614.0 716.0 L623.1 719.1 L630.7 713.0 L639.9 716.0" fill="none" stroke="#4c4c60" stroke-width="1.3" stroke-opacity="0.9" stroke-linejoin="round"/><path d="M848.2 781.4 L848.2 792.1 L857.3 799.7 L872.5 790.5" fill="none" stroke="#4c4c60" stroke-width="1.3" stroke-opacity="0.9" stroke-linejoin="round"/><path d="M785.1 16.6 L788.4 49.9 L795.1 63.2 L806.7 69.9 L820.0 78.2" fill="none" stroke="#27362f" stroke-width="3" stroke-opacity="0.7" stroke-linejoin="round"/><path d="M811.7 33.3 L811.7 56.6 L825.0 63.2 L841.6 76.5 L854.9 83.2" fill="none" stroke="#27362f" stroke-width="3" stroke-opacity="0.7" stroke-linejoin="round"/><path d="M847.8 46.4 L850.9 33.8 L858.3 23.2 L865.7 13.1 L866.8 21.1 L861.5 35.9 L858.8 46.9Z M922.7 271.3 L928.0 268.5 L932.2 272.3 L930.5 277.6 L924.8 277.0Z" fill="#4c5470"/><path d="M221.8 86.4 L227.5 100.8 L241.9 118.1 L267.9 129.6 L279.4 144.0 L302.4 152.6 L316.8 161.3 L331.2 181.5 L339.9 207.4 L345.6 236.2 L354.3 262.1" fill="none" stroke="#2c4f92" stroke-width="1.3" stroke-opacity="0.75" stroke-linejoin="round"/><path d="M515.6 213.1 L518.4 187.2 L522.8 161.3 L527.1 129.6 L524.2 86.4 L527.1 43.2 L521.3 25.9 L535.7 17.3 L558.8 20.2 L576.0 28.8 L581.8 0.0" fill="none" stroke="#2c4f92" stroke-width="1.3" stroke-opacity="0.75" stroke-linejoin="round"/><path d="M489.6 0.0 L492.5 43.2 L475.2 74.9 L489.6 100.8" fill="none" stroke="#2c4f92" stroke-width="1.3" stroke-opacity="0.75" stroke-linejoin="round"/><path d="M653.6 108.1 L667.0 109.8 L678.6 99.8 L686.9 86.5 L691.9 71.5 L703.6 67.4 L721.9 68.2 L735.2 73.2 L743.5 79.9 L758.5 78.2 L775.1 73.2 L788.4 75.7 L801.7 78.2 L818.3 78.2 L831.7 84.8 L850.0 90.7 L858.3 81.5 L874.9 79.0 L888.2 79.9 L901.5 89.8 L911.5 91.5 L924.8 84.8 L941.5 83.2 L959.8 87.3" fill="none" stroke="#2c4f92" stroke-width="1.3" stroke-opacity="0.75" stroke-linejoin="round"/><path d="M0.0 239.1 L17.3 241.9 L49.0 253.5 L86.4 265.0 L121.0 282.3 L149.8 299.5 L178.6 325.5 L201.6 342.7 L230.4 360.0 L259.2 367.2 L276.5 374.4 L285.1 397.5" fill="none" stroke="#2c4f92" stroke-width="1.3" stroke-opacity="0.75" stroke-linejoin="round"/><path d="M0.0 345.6 L28.8 342.7 L57.6 348.5 L86.4 354.3 L115.2 354.3 L119.5 345.6" fill="none" stroke="#2c4f92" stroke-width="1.3" stroke-opacity="0.75" stroke-linejoin="round"/><path d="M0.0 477.9 L23.0 475.0 L51.8 463.5 L74.9 454.8 L97.9 431.8 L109.4 416.0 L126.7 408.8 L144.0 423.2" fill="none" stroke="#2c4f92" stroke-width="1.3" stroke-opacity="0.75" stroke-linejoin="round"/><path d="M1286.0 19.0 L1267.9 14.8 L1253.1 8.4 L1236.2 0.0" fill="none" stroke="#2c4f92" stroke-width="1.3" stroke-opacity="0.75" stroke-linejoin="round"/><path d="M152.6 214.6 L161.3 218.9 L172.8 221.8 L175.7 233.3 L184.3 239.1 L207.4 244.8 L224.7 253.5 L244.8 262.1 L265.0 265.0 L288.0 263.5 L290.9 253.5 L305.3 256.3 L322.6 265.0 L337.0 269.3 L351.4 276.5 L365.8 288.0 L383.1 288.0 L403.2 285.1 L417.6 280.8 L426.3 282.3" fill="none" stroke="#8a8a9a" stroke-width="1.6" stroke-opacity="0.75" stroke-linejoin="round"/><path d="M650.0 0.0 L651.7 10.7 L639.2 17.9 L637.4 26.8 L646.4 37.6 L657.1 44.7 L655.3 60.8 L642.8 71.6 L628.5 75.1 L633.9 89.4 L646.4 96.6 L651.7 107.3 L646.4 110.9 L641.0 121.6 L642.8 136.0 L653.5 146.7 L671.4 153.8 L685.7 150.3 L689.3 157.4 L682.2 168.2 L676.8 177.1" fill="none" stroke="#8a8a9a" stroke-width="1.6" stroke-opacity="0.75" stroke-linejoin="round"/><path d="M651.7 10.7 L662.5 12.5 L680.4 5.4 L696.5 8.1 L700.0 0.0" fill="none" stroke="#8a8a9a" stroke-width="1.6" stroke-opacity="0.75" stroke-linejoin="round"/><path d="M1020.9 46.4 L1037.8 42.2 L1052.5 44.3 L1063.1 38.0 L1075.8 31.7 L1088.4 44.3 L1105.3 48.6 L1118.0 44.3 L1120.1 27.4 L1126.4 12.7 L1143.3 0.0" fill="none" stroke="#8a8a9a" stroke-width="1.6" stroke-opacity="0.75" stroke-linejoin="round"/><path d="M1143.3 69.7 L1156.0 65.4 L1172.9 73.9 L1185.5 67.6 L1206.7 63.3 L1215.1 67.6 L1236.2 71.8 L1257.3 78.1 L1286.0 71.8" fill="none" stroke="#8a8a9a" stroke-width="1.6" stroke-opacity="0.75" stroke-linejoin="round"/><path d="M1143.3 69.7 L1143.3 95.0 L1160.2 118.2 L1168.7 139.3 L1183.4 156.2 L1204.5 177.3 L1225.7 202.7 L1232.0 221.7 L1248.9 238.5 L1270.0 253.3 L1286.0 263.9" fill="none" stroke="#8a8a9a" stroke-width="1.6" stroke-opacity="0.75" stroke-linejoin="round"/><path d="M735.7 700.1 L729.6 702.3 L732.6 711.5 L714.4 720.6 L726.5 725.2 L723.5 738.8 L720.4 755.6 L720.4 773.8 L726.5 779.9 L726.5 792.1 L723.5 808.0" fill="none" stroke="#8a8a9a" stroke-width="1.6" stroke-opacity="0.75" stroke-linejoin="round"/><path d="M675.35 572.50 A22.6 22.6 0 1 1 713.45 572.50 L694.40 602.20 Z" fill="#00cccc"/><circle cx="694.40" cy="560.30" r="15.3" fill="#000028"/><circle cx="18" cy="811" r="14" fill="#37374d"/><circle cx="18" cy="806.5" r="1.4" fill="#30d0d0"/><path d="M47 808 Q51 803 55 808Z" fill="#21212f"/></svg><div class="a" style="left:1205.4px;top:594.3px;width:63.6px;height:63.4px;background:#37374e"></div><div class="a" style="left:1205.4px;top:660.5px;width:63.6px;height:63.2px;background:#37374e"></div><div class="a" style="left:1205.4px;top:726.5px;width:63.6px;height:63.4px;background:#37374e"></div><svg class="a" style="left:1227.0px;top:616.2px" width="21" height="21"><path d="M10.3 0V20.6M0 10.3H20.6" stroke="#00cccc" stroke-width="3"/></svg><svg class="a" style="left:1227.0px;top:690.5px" width="21" height="4"><path d="M0 1.5H20.6" stroke="#00cccc" stroke-width="3"/></svg><svg class="a" style="left:1225.3px;top:746.0px" width="25" height="25"><path d="M1.5 8.5V1.5H8.5M16 1.5H23V8.5M23 16V23H16M8.5 23H1.5V16" fill="none" stroke="#00cccc" stroke-width="3"/></svg><div class="a lbl" style="left:0;top:0"><div class="t" style="left:497.17px;top:19.38px;font-size:14.49px;letter-spacing:0.419px;color:#e8e8ec;font-weight:400">Lyon</div><div class="t" style="left:738.21px;top:41.77px;font-size:15.22px;letter-spacing:0.195px;color:#e8e8ec;font-weight:400">Milan</div><div class="t" style="left:646.69px;top:176.63px;font-size:14.20px;letter-spacing:-0.269px;color:#e8e8ec;font-weight:400">Monaco</div><div class="t" style="left:1113.05px;top:15.08px;font-size:14.49px;letter-spacing:-0.056px;color:#e8e8ec;font-weight:400">Zagreb</div><div class="t" style="left:1095.82px;top:94.78px;font-size:14.49px;letter-spacing:-0.772px;color:#e8e8ec;font-weight:400">Croatia</div><div class="t" style="left:920.95px;top:161.98px;font-size:14.49px;letter-spacing:-0.608px;color:#e8e8ec;font-weight:400">San Marino</div><div class="t" style="left:1238.55px;top:171.98px;font-size:14.49px;letter-spacing:-0.281px;color:#e8e8ec;font-weight:400">Sarajev</div><div class="t" style="left:1102.80px;top:248.38px;font-size:14.49px;letter-spacing:0.879px;color:#e8e8ec;font-weight:400">Adriatic Sea</div><div class="t" style="left:944.00px;top:258.03px;font-size:16.67px;letter-spacing:0.159px;color:#e8e8ec;font-weight:400">Italy</div><div class="t" style="left:923.17px;top:322.38px;font-size:14.49px;letter-spacing:-0.313px;color:#e8e8ec;font-weight:400">Rome</div><div class="t" style="left:862.97px;top:389.48px;font-size:14.49px;letter-spacing:0.958px;color:#e8e8ec;font-weight:400">Tyrrhenian Sea</div><div class="t" style="left:317.70px;top:270.48px;font-size:14.49px;letter-spacing:-0.725px;color:#e8e8ec;font-weight:400">Andorra</div><div class="t" style="left:314.27px;top:360.68px;font-size:14.49px;letter-spacing:-0.215px;color:#e8e8ec;font-weight:400">Barcelona</div><div class="t" style="left:0.27px;top:432.48px;font-size:14.49px;letter-spacing:0.349px;color:#e8e8ec;font-weight:400">Madrid</div><div class="t" style="left:39.82px;top:458.57px;font-size:15.22px;letter-spacing:0.102px;color:#e8e8ec;font-weight:400">Spain</div><div class="t" style="left:332.97px;top:426.68px;font-size:14.49px;letter-spacing:0.688px;color:#e8e8ec;font-weight:400">Balearic Sea</div><div class="t" style="left:180.90px;top:502.98px;font-size:14.49px;letter-spacing:-0.116px;color:#e8e8ec;font-weight:400">Valencia</div><div class="t" style="left:517.27px;top:634.08px;font-size:14.49px;letter-spacing:1.073px;color:#e8e8ec;font-weight:400">Mediterranean Sea</div><div class="t" style="left:384.50px;top:696.58px;font-size:14.49px;letter-spacing:-0.008px;color:#e8e8ec;font-weight:400">Algiers</div><div class="t" style="left:186.52px;top:771.48px;font-size:14.49px;letter-spacing:0.125px;color:#e8e8ec;font-weight:400">Oran</div><div class="t" style="left:1015.87px;top:402.18px;font-size:14.49px;letter-spacing:0.094px;color:#e8e8ec;font-weight:400">Naples</div><div class="t" style="left:955.67px;top:601.78px;font-size:14.49px;letter-spacing:0.026px;color:#e8e8ec;font-weight:400">Palermo</div><div class="t" style="left:798.17px;top:694.58px;font-size:14.49px;letter-spacing:-0.481px;color:#e8e8ec;font-weight:400">Tunis</div><div class="t" style="left:1026.80px;top:757.88px;font-size:14.49px;letter-spacing:0.106px;color:#e8e8ec;font-weight:400">Valletta</div><div class="t" style="left:1275.87px;top:564.88px;font-size:14.49px;letter-spacing:1.633px;color:#e8e8ec;font-weight:400">Io</div><div class="t" style="left:410.50px;top:132.26px;font-size:12.75px;letter-spacing:0.125px;color:#63c46d;font-weight:700">Parc national des</div><div class="t" style="left:410.90px;top:146.96px;font-size:12.75px;letter-spacing:0.170px;color:#63c46d;font-weight:700">Cévennes (cœur)</div><div class="t" style="left:545.00px;top:197.16px;font-size:12.75px;letter-spacing:0.112px;color:#63c46d;font-weight:700">Parc naturel</div><div class="t" style="left:539.20px;top:212.36px;font-size:12.75px;letter-spacing:0.269px;color:#63c46d;font-weight:700">régional de la</div><div class="t" style="left:539.80px;top:226.76px;font-size:12.75px;letter-spacing:0.043px;color:#63c46d;font-weight:700">Sainte-Baume</div><div class="t" style="left:406.70px;top:245.46px;font-size:12.75px;letter-spacing:0.176px;color:#63c46d;font-weight:700">Parc naturel</div><div class="t" style="left:398.10px;top:260.46px;font-size:12.75px;letter-spacing:0.248px;color:#63c46d;font-weight:700">marin du Golfe</div><div class="t" style="left:421.00px;top:274.86px;font-size:12.75px;letter-spacing:0.129px;color:#63c46d;font-weight:700">du Lion</div><div class="t" style="left:27.40px;top:290.16px;font-size:12.75px;letter-spacing:0.118px;color:#63c46d;font-weight:700">Espacio Natural</div><div class="t" style="left:31.30px;top:305.06px;font-size:12.75px;letter-spacing:0.201px;color:#63c46d;font-weight:700">de la Sierra de</div><div class="t" style="left:39.50px;top:319.76px;font-size:12.75px;letter-spacing:0.125px;color:#63c46d;font-weight:700">la Demanda</div><div class="t" style="left:619.00px;top:28.06px;font-size:12.75px;letter-spacing:0.092px;color:#63c46d;font-weight:700">Parco Nazionale</div><div class="t" style="left:626.10px;top:42.46px;font-size:12.75px;letter-spacing:-0.097px;color:#63c46d;font-weight:700">Gran Paradiso</div><div class="t" style="left:757.20px;top:219.56px;font-size:12.75px;letter-spacing:0.142px;color:#63c46d;font-weight:700">Parco Nazionale</div><div class="t" style="left:761.10px;top:235.46px;font-size:12.75px;letter-spacing:0.150px;color:#63c46d;font-weight:700">dell'Arcipelago</div><div class="t" style="left:783.10px;top:249.86px;font-size:12.75px;letter-spacing:-0.263px;color:#63c46d;font-weight:700">Toscano</div><div class="t" style="left:998.30px;top:302.56px;font-size:12.75px;letter-spacing:0.142px;color:#63c46d;font-weight:700">Parco Nazionale</div><div class="t" style="left:1009.40px;top:317.46px;font-size:12.75px;letter-spacing:0.273px;color:#63c46d;font-weight:700">della Majella</div><div class="t" style="left:375.10px;top:511.16px;font-size:12.75px;letter-spacing:0.129px;color:#63c46d;font-weight:700">Parc Nacional de</div><div class="t" style="left:393.80px;top:526.06px;font-size:12.75px;letter-spacing:0.262px;color:#63c46d;font-weight:700">l'Arxipèlag</div><div class="t" style="left:393.60px;top:540.46px;font-size:12.75px;letter-spacing:0.054px;color:#63c46d;font-weight:700">de Cabrera</div><div class="t" style="left:51.00px;top:578.76px;font-size:12.75px;letter-spacing:0.279px;color:#63c46d;font-weight:700">Parque Natural</div><div class="t" style="left:53.50px;top:593.76px;font-size:12.75px;letter-spacing:0.159px;color:#63c46d;font-weight:700">de la Sierra de</div><div class="t" style="left:49.10px;top:608.76px;font-size:12.75px;letter-spacing:0.052px;color:#63c46d;font-weight:700">Cazorla, Segura</div><div class="t" style="left:65.70px;top:623.16px;font-size:12.75px;letter-spacing:0.083px;color:#63c46d;font-weight:700">y las Villas</div><div class="t" style="left:1114.40px;top:461.26px;font-size:12.75px;letter-spacing:0.142px;color:#63c46d;font-weight:700">Parco Nazionale</div><div class="t" style="left:1131.20px;top:475.66px;font-size:12.75px;letter-spacing:0.204px;color:#63c46d;font-weight:700">del Pollino</div><div class="t" style="left:686.40px;top:688.26px;font-size:12.75px;letter-spacing:0.203px;color:#63c46d;font-weight:700">Parc National</div><div class="t" style="left:702.10px;top:703.26px;font-size:12.75px;letter-spacing:-0.155px;color:#63c46d;font-weight:700">d'El Kala</div><div class="t" style="left:-2.80px;top:138.96px;font-size:12.75px;letter-spacing:-0.167px;color:#63c46d;font-weight:700">na</div><div class="t" style="left:-2.40px;top:153.86px;font-size:12.75px;letter-spacing:-0.167px;color:#63c46d;font-weight:700">de</div><div class="t" style="left:-2.80px;top:168.36px;font-size:12.75px;letter-spacing:-0.367px;color:#63c46d;font-weight:700">ho</div><div class="t" style="left:-2.80px;top:206.66px;font-size:12.75px;letter-spacing:0.198px;color:#63c46d;font-weight:700">ional</div><div class="t" style="left:-2.40px;top:221.06px;font-size:12.75px;letter-spacing:-0.167px;color:#63c46d;font-weight:700">de</div></div></div>
<div class="a" style="left:1704.00px;top:1480.00px;width:752.00px;height:888.00px;background:#23233c;border-radius:8px"></div>
<div class="t" style="left:1735.64px;top:1506.16px;font-size:28.99px;letter-spacing:0.315px;color:#f5f5f7;-webkit-text-stroke:0.81px #f5f5f7">Overview</div>
<svg class="a" style="left:2395.70px;top:1508.00px" width="24" height="24" viewBox="0 0 24 24"><circle cx="12" cy="1.5" r="3.1" fill="#00cccc"/><circle cx="12" cy="12" r="3.1" fill="#00cccc"/><circle cx="12" cy="22.5" r="3.1" fill="#00cccc"/></svg>
<div class="t" style="left:1734.68px;top:1609.25px;font-size:29.71px;letter-spacing:0.473px;color:#f5f5f7;-webkit-text-stroke:0.83px #f5f5f7">Power limitation</div>
<div class="t" style="left:2369.68px;top:1609.49px;font-size:29.42px;letter-spacing:-2.544px;color:#f5f5f7;font-weight:400">80%</div>
<div class="a" style="left:1704.00px;top:1686.00px;width:752.00px;height:2.00px;background:#4b4b66;"></div>
<div class="t" style="left:1734.68px;top:1737.25px;font-size:29.71px;letter-spacing:-1.086px;color:#f5f5f7;-webkit-text-stroke:0.83px #f5f5f7">IP address</div>
<div class="t" style="left:2270.06px;top:1737.49px;font-size:29.42px;letter-spacing:-0.169px;color:#f5f5f7;font-weight:400">192.168.2.1</div>
<div class="a" style="left:1704.00px;top:1814.00px;width:752.00px;height:2.00px;background:#4b4b66;"></div>
<div class="t" style="left:1734.68px;top:1865.25px;font-size:29.71px;letter-spacing:-0.683px;color:#f5f5f7;-webkit-text-stroke:0.83px #f5f5f7">Mac address</div>
<div class="t" style="left:2184.68px;top:1865.49px;font-size:29.42px;letter-spacing:-1.203px;color:#f5f5f7;font-weight:400">00-B0-D0-63-C2-26</div>
<div class="a" style="left:1704.00px;top:1942.00px;width:752.00px;height:2.00px;background:#4b4b66;"></div>
<div class="t" style="left:1801.77px;top:1993.25px;font-size:29.71px;letter-spacing:0.086px;color:#f5f5f7;-webkit-text-stroke:0.83px #f5f5f7">Signal strength</div>
<div class="t" style="left:2327.08px;top:1993.49px;font-size:29.42px;letter-spacing:-1.194px;color:#f5f5f7;font-weight:400">-49dBm</div>
<svg class="a" style="left:1738.00px;top:1988.00px" width="42" height="40" viewBox="0 0 42 40"><circle cx="11" cy="29.6" r="3" fill="#fff"/><path d="M8.9 17.7A14 14 0 0 1 23.7 31.7" fill="none" stroke="#fff" stroke-width="2.1" stroke-linecap="round"/><path d="M8.9 7A24.8 24.8 0 0 1 34.6 31.6" fill="none" stroke="#6a6a88" stroke-width="2.1" stroke-linecap="round"/></svg>
<div class="t" style="left:1735.44px;top:2305.76px;font-size:28.99px;letter-spacing:-0.690px;color:#00cccc;font-weight:400">Go to settings</div>
<svg class="a" style="left:1925.00px;top:2313.00px" width="9.25" height="15.5" viewBox="0 0 9.25 15.5"><path d="M1 1L7.25 7.25L1 13.5" fill="none" stroke="#00cccc" stroke-width="2"/></svg>
<div class="a" style="left:2488.00px;top:1480.00px;width:752.00px;height:888.00px;background:#23233c;border-radius:8px"></div>
<svg class="a" style="left:2524.00px;top:1523.00px" width="42" height="42" viewBox="0 0 42 42"><path d="M21 1.7L40.3 21L21 40.3L1.7 21Z" fill="#ffd732" stroke="#ffd732" stroke-width="1.5" stroke-linejoin="round"/><path d="M21 11.8V22" stroke="#000028" stroke-width="3.6" stroke-linecap="round"/><circle cx="21" cy="28" r="2.2" fill="#000028"/></svg>
<div class="t" style="left:2585.22px;top:1511.79px;font-size:29.42px;letter-spacing:0.303px;color:#f5f5f7;-webkit-text-stroke:0.82px #f5f5f7">Current firmware version</div>
<div class="t" style="left:2585.24px;top:1547.66px;font-size:28.99px;letter-spacing:-0.324px;color:#b4b4bf;font-weight:400">Outdated</div>
<div class="t" style="left:3143.54px;top:1529.65px;font-size:29.71px;letter-spacing:-0.755px;color:#f5f5f7;font-weight:400">1.2.1</div>
<div class="a" style="left:2488.00px;top:1606.00px;width:752.00px;height:2.00px;background:#4b4b66;"></div>
<svg class="a" style="left:2528.00px;top:1656.00px" width="34" height="33" viewBox="0 0 34 33"><rect x="0.2" y="0" width="33.6" height="32" rx="2" fill="#2a6fdb"/><circle cx="17" cy="9.5" r="2.3" fill="#fff"/><path d="M17 14.8V22" stroke="#fff" stroke-width="4.2" stroke-linecap="round"/></svg>
<div class="t" style="left:2584.34px;top:1657.06px;font-size:28.99px;letter-spacing:0.637px;color:#f5f5f7;-webkit-text-stroke:0.81px #f5f5f7">M0 firmware version</div>
<div class="t" style="left:3144.14px;top:1656.75px;font-size:29.71px;letter-spacing:-0.755px;color:#f5f5f7;font-weight:400">1.2.3</div>
<div class="a" style="left:2488.00px;top:1734.00px;width:752.00px;height:2.00px;background:#4b4b66;"></div>
<svg class="a" style="left:2526.00px;top:1781.00px" width="40" height="40" viewBox="0 0 40 40"><path d="M4.4 17.6A14 14 0 0 1 31.5 11" fill="none" stroke="#fff" stroke-width="2.1"/><path d="M24.3 11.5H31.8V3.8" fill="none" stroke="#fff" stroke-width="2.1"/><path d="M31.4 22.4A14 14 0 0 1 4.5 29" fill="none" stroke="#fff" stroke-width="2.1"/><path d="M11.7 28.6H4.2V36.2" fill="none" stroke="#fff" stroke-width="2.1"/></svg>
<div class="t" style="left:2584.28px;top:1785.05px;font-size:29.71px;letter-spacing:-0.106px;color:#f5f5f7;-webkit-text-stroke:0.83px #f5f5f7">Last update</div>
<div class="t" style="left:3057.11px;top:1785.05px;font-size:29.71px;letter-spacing:-0.791px;color:#f5f5f7;font-weight:400">2 Nov, 2022</div>
</div></body></html>
